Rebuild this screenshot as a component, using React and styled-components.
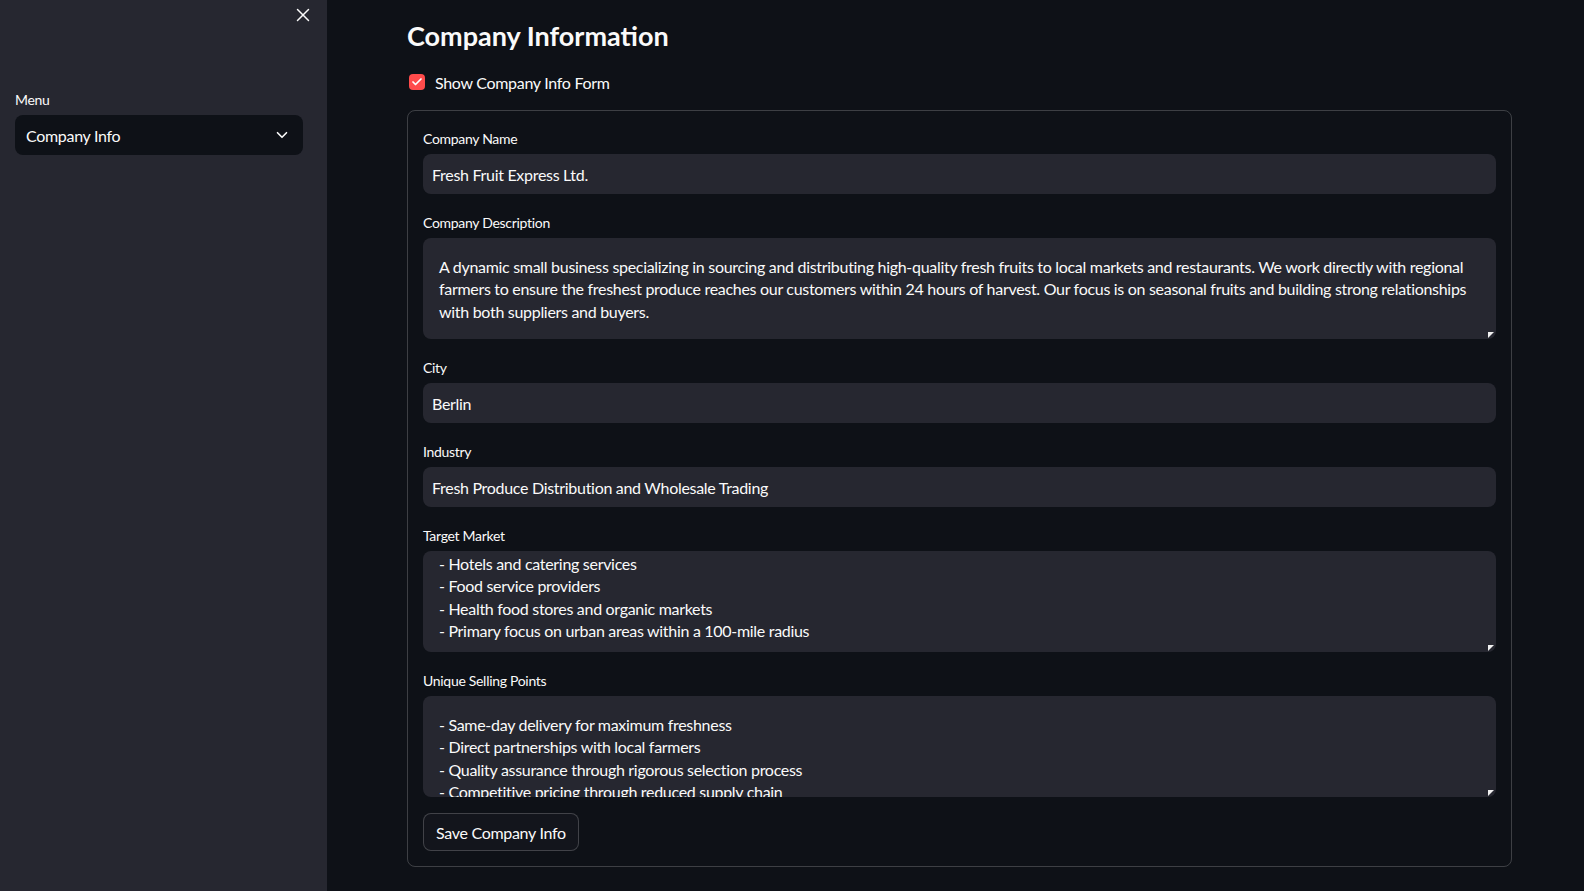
import React from "react";
import styled, { createGlobalStyle } from "styled-components";
import { X, ChevronDown, Check } from "lucide-react";

const GlobalStyle = createGlobalStyle`
  html, body {
    margin: 0;
    padding: 0;
    background: #0e1117;
    color: #fafafa;
    font-family: Lato, "Noto Sans", sans-serif;
    letter-spacing: -0.3px;
  }
  * { box-sizing: border-box; }
`;

const Page = styled.div`
  display: flex;
  min-height: 100vh;
  background: #0e1117;
`;

const Sidebar = styled.aside`
  width: 327px;
  flex: none;
  background: #262730;
  padding: 4px 24px 0 15px;
  display: flex;
  flex-direction: column;
`;

const CloseRow = styled.div`
  display: flex;
  justify-content: flex-end;
  height: 83px;
  margin-right: -11px;
  color: #fafafa;
  svg { display: block; }
`;

const Main = styled.main`
  flex: 1;
  min-width: 0;
  padding: 16px 72px 24px 80px;
  display: flex;
  flex-direction: column;
`;

const Title = styled.h1`
  margin: 0;
  font-size: 27px;
  font-weight: 700;
  line-height: 40px;
  letter-spacing: 0;
  color: #fafafa;
`;

const CheckRow = styled.label`
  display: flex;
  align-items: center;
  gap: 10px;
  margin: 18px 0 20px 2px;
  font-size: 16px;
  height: 16px;
`;

const CheckBox = styled.span`
  width: 16px;
  height: 16px;
  border-radius: 4px;
  background: #ff4b4b;
  display: flex;
  align-items: center;
  justify-content: center;
  color: #fff;
`;

const FormBox = styled.form`
  border: 1px solid rgba(250, 250, 250, 0.2);
  border-radius: 8px;
  padding: 15px;
  display: flex;
  flex-direction: column;
  gap: 16px;
  min-width: 0;
`;

const Field = styled.div`
  display: flex;
  flex-direction: column;
  min-width: 0;
`;

const Label = styled.div`
  min-height: 24px;
  margin-bottom: 4px;
  display: flex;
  align-items: center;
  font-size: 14px;
  color: #fafafa;
`;

const Input = styled.div`
  height: 40px;
  border-radius: 8px;
  background: #262730;
  padding: 0 9px;
  display: flex;
  align-items: center;
  justify-content: space-between;
  font-size: 16px;
  color: #fafafa;
`;

const SelectBox = styled(Input)`
  padding: 0 12px 0 11px;
  background: #0e1117;
`;

const TextArea = styled.div`
  position: relative;
  height: 101px;
  border-radius: 8px;
  background: #262730;
  padding: ${(p) => p.$padTop}px 16px 16px 16px;
  font-size: 16px;
  line-height: 22.4px;
  color: #fafafa;
  white-space: pre;
  overflow: hidden;
  &::after {
    content: "";
    position: absolute;
    right: 2px;
    bottom: 1px;
    width: 0;
    height: 0;
    border-top: 6px solid #f0f0f0;
    border-right: 6px solid transparent;
  }
`;

const Button = styled.button`
  align-self: flex-start;
  height: 38px;
  padding: 0 12px;
  border: 1px solid rgba(250, 250, 250, 0.2);
  border-radius: 8px;
  background: #13151c;
  color: #fafafa;
  font-family: inherit;
  letter-spacing: inherit;
  font-size: 16px;
`;

const fields = [
  { label: "Company Name", value: "Fresh Fruit Express Ltd." },
  {
    label: "Company Description",
    area: true,
    pad: 18,
    value:
      "A dynamic small business specializing in sourcing and distributing high-quality fresh fruits to local markets and restaurants. We work directly with regional\nfarmers to ensure the freshest produce reaches our customers within 24 hours of harvest. Our focus is on seasonal fruits and building strong relationships\nwith both suppliers and buyers.",
  },
  { label: "City", value: "Berlin" },
  { label: "Industry", value: "Fresh Produce Distribution and Wholesale Trading" },
  {
    label: "Target Market",
    area: true,
    pad: 2,
    value:
      "- Hotels and catering services\n- Food service providers\n- Health food stores and organic markets\n- Primary focus on urban areas within a 100-mile radius",
  },
  {
    label: "Unique Selling Points",
    area: true,
    pad: 18,
    value:
      "- Same-day delivery for maximum freshness\n- Direct partnerships with local farmers\n- Quality assurance through rigorous selection process\n- Competitive pricing through reduced supply chain",
  },
];

export default function App() {
  return (
    <Page>
      <GlobalStyle />
      <Sidebar>
        <CloseRow>
          <X size={22} strokeWidth={1.6} />
        </CloseRow>
        <Field>
          <Label>Menu</Label>
          <SelectBox>
            <span>Company Info</span>
            <ChevronDown size={18} strokeWidth={2.2} />
          </SelectBox>
        </Field>
      </Sidebar>
      <Main>
        <Title>Company Information</Title>
        <CheckRow>
          <CheckBox>
            <Check size={12} strokeWidth={3.5} />
          </CheckBox>
          Show Company Info Form
        </CheckRow>
        <FormBox onSubmit={(e) => e.preventDefault()}>
          {fields.map((f) => (
            <Field key={f.label}>
              <Label>{f.label}</Label>
              {f.area ? (
                <TextArea $padTop={f.pad}>{f.value}</TextArea>
              ) : (
                <Input>{f.value}</Input>
              )}
            </Field>
          ))}
          <Button type="button">Save Company Info</Button>
        </FormBox>
      </Main>
    </Page>
  );
}
